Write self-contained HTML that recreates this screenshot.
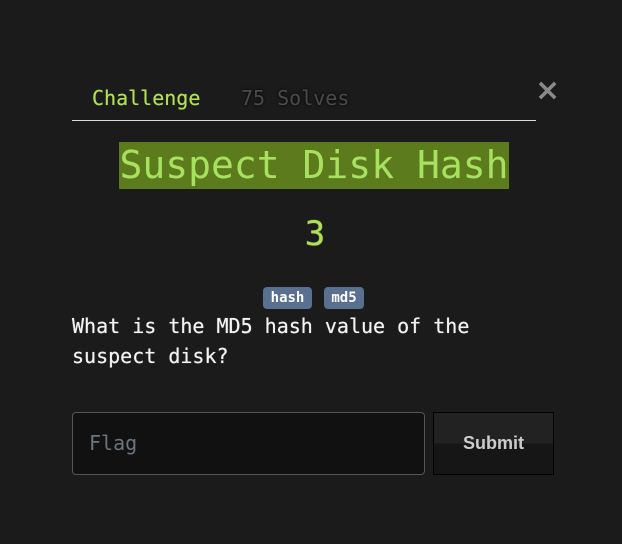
<!DOCTYPE html>
<html><head><style>
body{margin:0;width:622px;height:544px;background:#1b1b1b;font-family:"DejaVu Sans Mono","Liberation Mono",monospace;position:relative;overflow:hidden}
.a{position:absolute;white-space:nowrap}
</style></head><body>
<div class="a" style="left:92px;top:86px;font-size:20px;color:#b0e05a;line-height:24px;text-shadow:0 0 0.5px #b0e05a">Challenge</div>
<div class="a" style="left:241px;top:86px;font-size:20px;color:#4a4a4a;line-height:24px;text-shadow:0 0 3px #000">75 Solves</div>
<div class="a" style="left:535px;top:76px;font-family:'DejaVu Sans',sans-serif;font-size:30px;color:#8a8a8a;font-weight:bold;line-height:30px">×</div>
<div class="a" style="left:72px;top:120px;width:464px;height:1px;background:#ddd"></div>
<div class="a" style="left:119px;top:142px;width:390px;height:47px;background:#5b7b1c"></div>
<div class="a" style="left:119px;top:142px;width:390px;text-align:center;font-size:38px;line-height:47px;color:#a8e060">Suspect Disk Hash</div>
<div class="a" style="left:4px;width:622px;top:214px;text-align:center;font-size:34px;line-height:40px;color:#b0e05a;text-shadow:0 0 1px #b0e05a">3</div>
<div class="a" style="left:263px;top:287px;width:49px;height:22px;border-radius:4px;background:#5a7090;color:#fff;font-weight:bold;font-size:14px;line-height:22px;text-align:center">hash</div>
<div class="a" style="left:324px;top:287px;width:40px;height:22px;border-radius:4px;background:#5a7090;color:#fff;font-weight:bold;font-size:14px;line-height:22px;text-align:center">md5</div>
<div class="a" style="left:72px;top:311px;font-size:20px;line-height:30px;color:#f2f2f2;text-shadow:0 0 0.6px #fff">What is the MD5 hash value of the<br>suspect disk?</div>
<div class="a" style="left:72px;top:412px;width:351px;height:61px;border:1px solid #555;border-radius:4px;background:#111"></div>
<div class="a" style="left:89px;top:430px;font-size:20px;line-height:26px;color:#6c757d">Flag</div>
<div class="a" style="left:433px;top:412px;width:119px;height:61px;border:1px solid #000;background:linear-gradient(#222 0,#222 50%,#161616 50%);color:#ccc;font-family:'Liberation Sans',sans-serif;font-weight:bold;font-size:18px;line-height:61px;text-align:center">Submit</div>
</body></html>
